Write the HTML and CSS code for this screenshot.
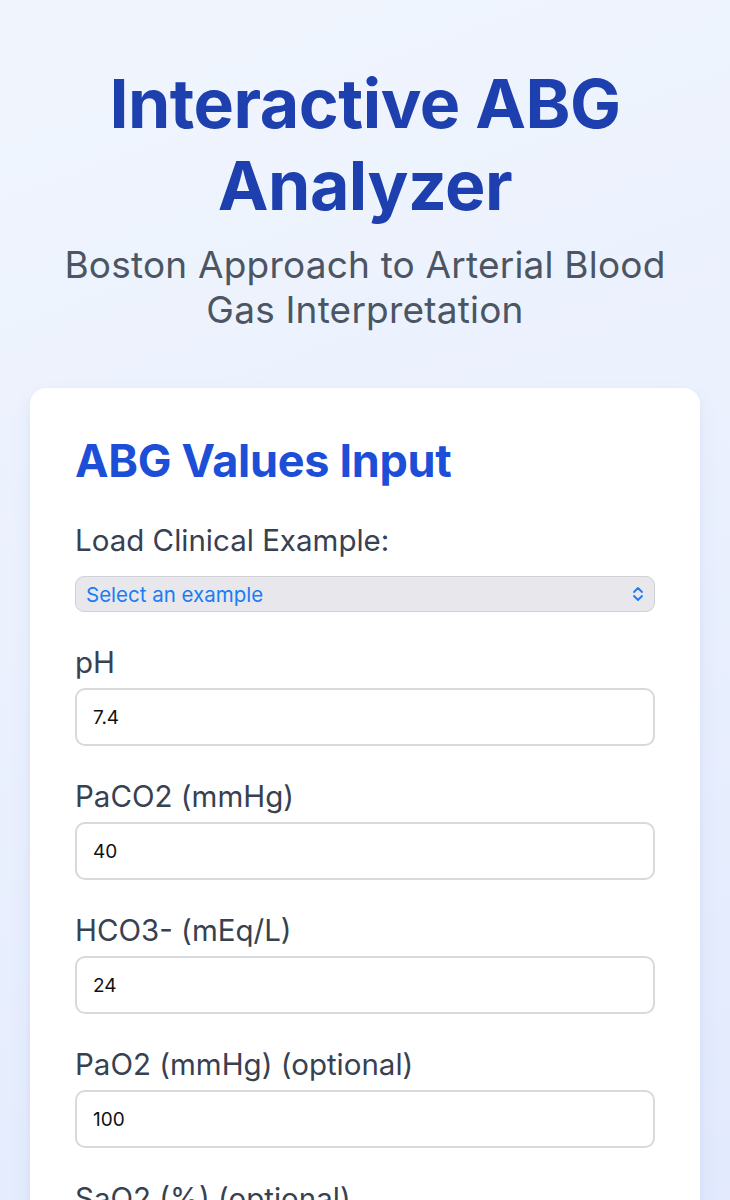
FILE: index.html
```html
<!DOCTYPE html>
<html lang="en">
<head>
<meta charset="utf-8">
<title>Interactive ABG Analyzer</title>
<link rel="stylesheet" href="styles.css">
</head>
<body>
<main class="page">
  <header class="hero">
    <h1 class="title">Interactive ABG Analyzer</h1>
    <p class="subtitle">Boston Approach to Arterial Blood Gas Interpretation</p>
  </header>
  <section class="card">
    <h2 class="card-title">ABG Values Input</h2>
    <div class="field field-select">
      <label class="label">Load Clinical Example:</label>
      <div class="select">
        <span class="select-text">Select an example</span>
        <svg class="select-icon" viewBox="0 0 12 16" width="12" height="16"><path d="M2 6 L6 2 L10 6 M2 10 L6 14 L10 10" fill="none" stroke="#1a7cf5" stroke-width="1.8" stroke-linecap="round" stroke-linejoin="round"/></svg>
      </div>
    </div>
    <div class="field">
      <label class="label">pH</label>
      <div class="input">7.4</div>
    </div>
    <div class="field">
      <label class="label">PaCO2 (mmHg)</label>
      <div class="input">40</div>
    </div>
    <div class="field">
      <label class="label">HCO3- (mEq/L)</label>
      <div class="input">24</div>
    </div>
    <div class="field">
      <label class="label">PaO2 (mmHg) (optional)</label>
      <div class="input">100</div>
    </div>
    <div class="field">
      <label class="label">SaO2 (%) (optional)</label>
      <div class="input">98</div>
    </div>
  </section>
</main>
</body>
</html>
```
FILE: styles.css
```css
* { box-sizing: border-box; }
html, body { margin: 0; padding: 0; }
body {
  font-family: Inter, "Noto Sans", "Liberation Sans", sans-serif;
  background: linear-gradient(160deg, #f0f5fd 0%, #ebf1fd 40%, #e0e8fd 100%);
  min-height: 1200px;
  color: #374151;
}
.page {
  padding: 62px 30px 40px;
  display: flex;
  flex-direction: column;
}
.hero {
  text-align: center;
  padding: 0 20px;
}
.title {
  margin: 0;
  font-size: 68px;
  line-height: 82px;
  font-weight: 700;
  color: #1e40af;
  letter-spacing: -0.5px;
}
.subtitle {
  margin: 16px 0 0;
  font-size: 37px;
  line-height: 45px;
  color: #4b5563;
  font-weight: 400;
  letter-spacing: 0.2px;
}
.card {
  margin-top: 56px;
  background: #fff;
  border-radius: 16px;
  box-shadow: 0 10px 25px rgba(30, 64, 175, 0.06), 0 2px 6px rgba(30, 64, 175, 0.04);
  padding: 42px 45px 40px;
}
.card-title {
  margin: 0 0 28px;
  font-size: 45px;
  line-height: 62px;
  font-weight: 700;
  color: #1d4ed8;
  letter-spacing: -0.3px;
}
.field { margin-bottom: 30px; }
.label {
  display: block;
  font-size: 29.5px;
  line-height: 40px;
  color: #374151;
  margin-bottom: 6px;
}
.field-select .label { margin-bottom: 16px; }
.select {
  height: 36px;
  border: 1px solid #cfd1d6;
  border-radius: 9px;
  background: #e8e8ec;
  display: flex;
  align-items: center;
  justify-content: space-between;
  padding: 0 10px 0 10px;
}
.select-text {
  font-size: 20.5px;
  color: #1a7cf5;
}
.input {
  height: 58px;
  border: 2px solid #d7d9dd;
  border-radius: 10px;
  background: #fff;
  display: flex;
  align-items: center;
  padding: 0 16px;
  font-size: 19px;
  color: #111;
}
```
